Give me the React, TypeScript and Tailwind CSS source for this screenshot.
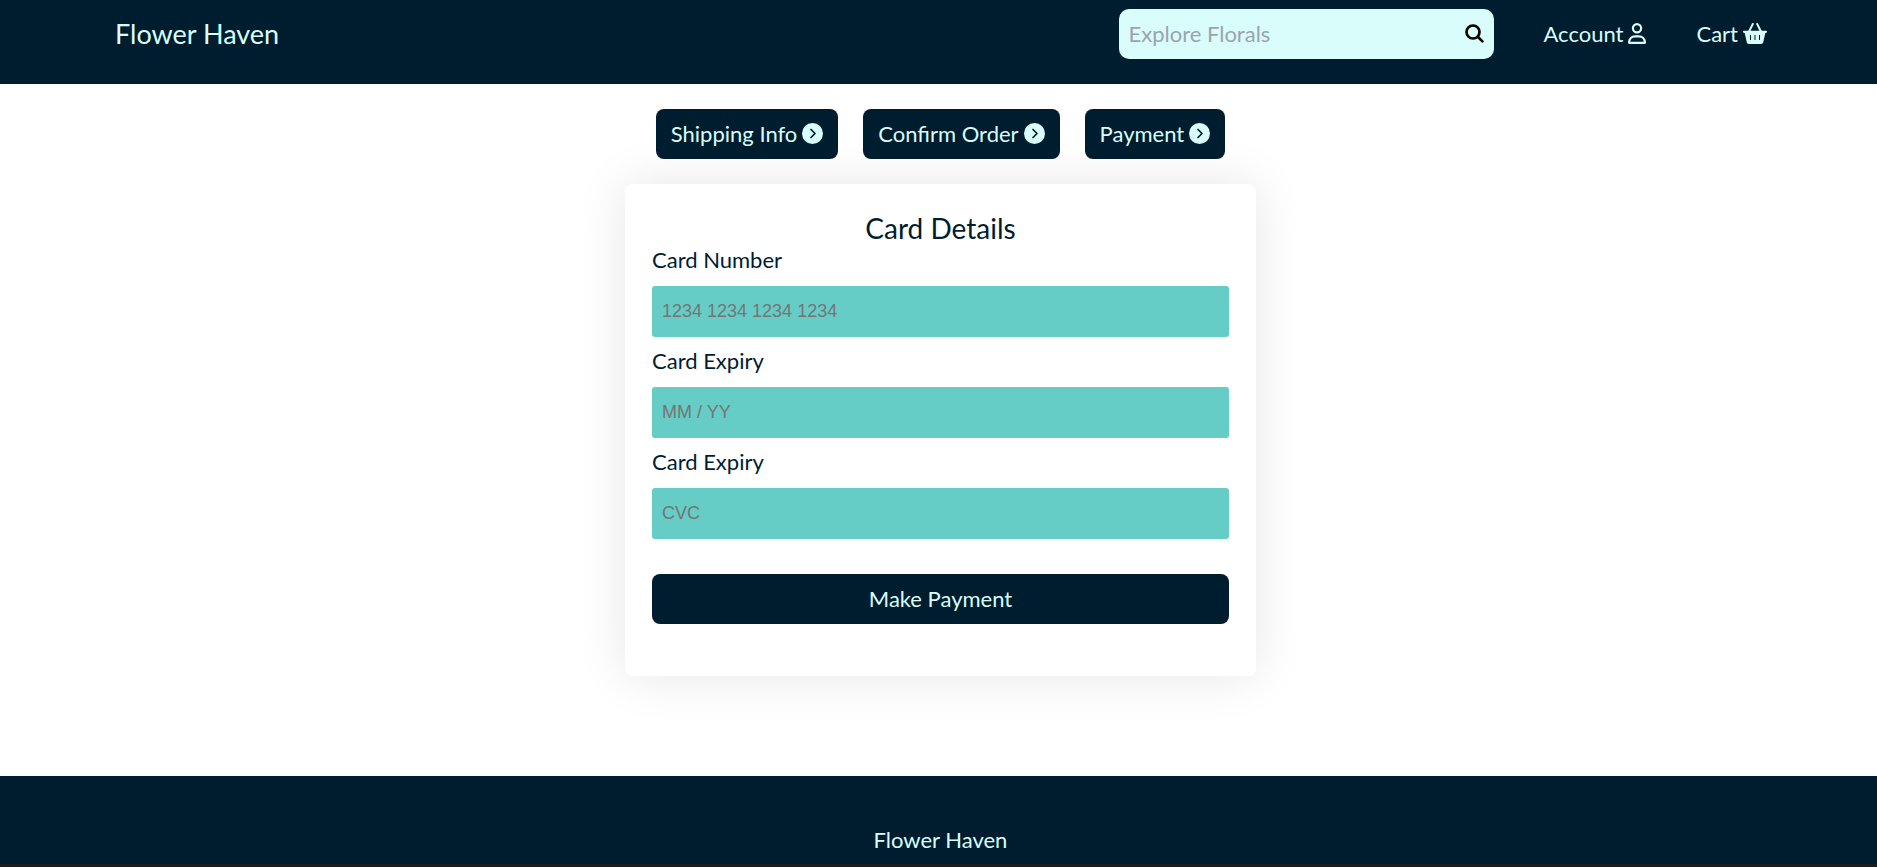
const steps = ["Shipping Info", "Confirm Order", "Payment"];

const fields = [
  { id: "card-number", label: "Card Number", placeholder: "1234 1234 1234 1234" },
  { id: "card-expiry", label: "Card Expiry", placeholder: "MM / YY" },
  { id: "card-cvc", label: "Card Expiry", placeholder: "CVC" },
];

function SearchIcon() {
  return (
    <svg
      viewBox="0 0 19 19"
      className="h-[19px] w-[19px]"
      fill="none"
      stroke="currentColor"
      strokeWidth="2.7"
      strokeLinecap="round"
      aria-hidden="true"
    >
      <circle cx="8" cy="8" r="6.5" />
      <path d="m13 13 4.400 4.400" />
    </svg>
  );
}

function UserIcon() {
  return (
    <svg
      viewBox="0 0 18 21"
      className="h-[21px] w-[18px]"
      fill="none"
      stroke="currentColor"
      strokeWidth="2.2"
      strokeLinejoin="round"
      aria-hidden="true"
    >
      <circle cx="9" cy="5.2" r="4.1" />
      <path d="M1.1 19.8C1.1 15.7 3.8 13.4 7.2 13.4h3.6c3.4 0 6.1 2.3 6.1 6.4Z" />
    </svg>
  );
}

function BasketIcon() {
  return (
    <svg viewBox="0 0 24 21" className="h-[21px] w-6" fill="currentColor" aria-hidden="true">
      <path
        d="M9.8 1 6.2 8.2M14.2 1l3.6 7.2"
        fill="none"
        stroke="currentColor"
        strokeWidth="2"
        strokeLinecap="round"
      />
      <path
        fillRule="evenodd"
        d="M1.2 7.8h21.6c.7 0 1.2.4 1.2 1s-.5 1.1-1.2 1.1h-.5l-2 9.2c-.3 1.2-1 1.9-2.2 1.9H5.9c-1.2 0-1.9-.7-2.2-1.9l-2-9.2h-.5C.5 9.900 0 9.500 0 8.800s.5-1 1.2-1ZM7 12v5h1v-5Zm4.500 0v5h1v-5ZM16 12v5h1v-5Z"
      />
    </svg>
  );
}

function ChevronCircleIcon() {
  return (
    <svg viewBox="0 0 21 21" className="h-[21px] w-[21px]" aria-hidden="true">
      <circle cx="10.5" cy="10.5" r="10.5" fill="currentColor" />
      <path
        d="m9 6.500 4 4-4 4"
        fill="none"
        stroke="#001d30"
        strokeWidth="1.7"
        strokeLinecap="round"
        strokeLinejoin="round"
      />
    </svg>
  );
}

function Header() {
  return (
    <header className="flex h-[84px] items-start justify-between bg-[#001d30] pt-[9px] pr-[110px] pl-[115px] text-[#d9fdfb]">
      <a href="#home" className="flex h-[50px] items-center text-[27px]">
        Flower Haven
      </a>
      <nav className="flex items-center gap-[50px]">
        <form className="flex h-[50px] w-[375px] items-center rounded-[10px] bg-[#d9fdfb] px-[10px] pb-[2px]">
          <input
            type="search"
            aria-label="Explore Florals"
            placeholder="Explore Florals"
            className="min-w-0 flex-1 bg-transparent text-[#001d30] outline-none placeholder:text-[#9ca3af]"
          />
          <button type="button" aria-label="Search" className="text-black">
            <SearchIcon />
          </button>
        </form>
        <a href="#account" className="flex items-center gap-[5px] pb-[2px]">
          Account <UserIcon />
        </a>
        <a href="#cart" className="flex items-center gap-[5px] pb-[2px]">
          Cart <BasketIcon />
        </a>
      </nav>
    </header>
  );
}

function Steps() {
  return (
    <div className="flex justify-center gap-[25px]">
      {steps.map((step) => (
        <button
          key={step}
          type="button"
          className="flex h-[50px] items-center gap-[5px] rounded-lg bg-[#001d30] px-[15px] pb-[2px] text-[#d9fdfb]"
        >
          {step} <ChevronCircleIcon />
        </button>
      ))}
    </div>
  );
}

function CardForm() {
  return (
    <form className="mx-auto mt-[25px] w-full max-w-[631px] rounded-lg bg-white px-[27px] pt-7 pb-[52px] shadow-[0_0_50px_rgba(0,0,0,0.1)]">
      <h1 className="text-center text-[28px] leading-8">Card Details</h1>
      {fields.map((field) => (
        <div key={field.id} className="pt-[2px] pb-2">
          <label htmlFor={field.id} className="block h-10 leading-7">
            {field.label}
          </label>
          <input
            id={field.id}
            type="text"
            placeholder={field.placeholder}
            className="block h-[51px] w-full rounded-[3px] bg-[#65cdc6] px-[10px] font-['Liberation_Sans',sans-serif] text-lg outline-none placeholder:text-[#757575]"
          />
        </div>
      ))}
      <button
        type="button"
        className="mt-[27px] h-[50px] w-full rounded-lg bg-[#001d30] pb-[2px] text-[#d9fdfb]"
      >
        Make Payment
      </button>
    </form>
  );
}

export default function App() {
  return (
    <div className="min-h-screen bg-white font-[Lato,sans-serif] text-[22px] text-[#001d30]">
      <Header />
      <main className="pt-[25px] pb-[100px] pl-1">
        <Steps />
        <CardForm />
      </main>
      <footer className="border-b-[3px] border-[#1d1d1d] bg-[#001d30] pt-[50px] pb-[10px] pl-1 text-center leading-7 text-[#d9fdfb]">
        Flower Haven
      </footer>
    </div>
  );
}
